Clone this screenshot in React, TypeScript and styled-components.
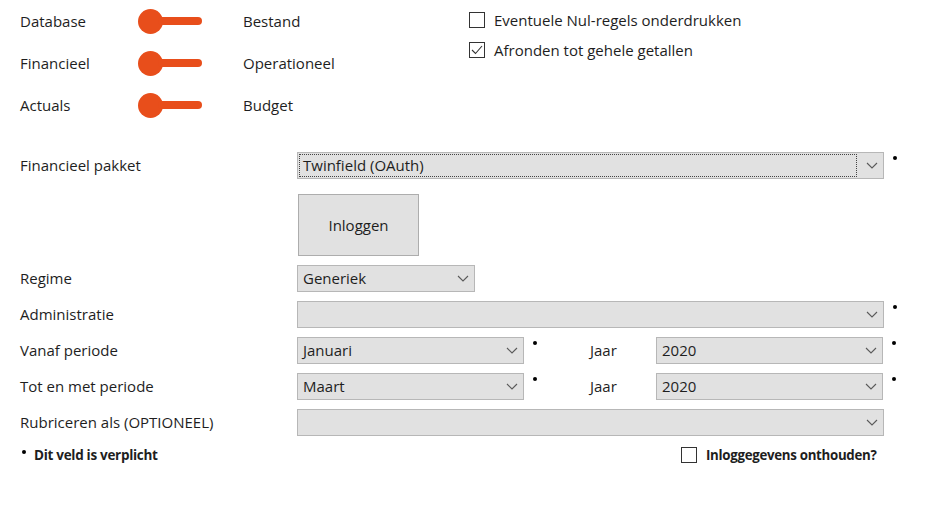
import React from "react";
import styled, { createGlobalStyle } from "styled-components";

const GlobalStyle = createGlobalStyle`
  html, body {
    margin: 0;
    padding: 0;
    background: #ffffff;
  }
  body {
    font-family: "Open Sans", "Noto Sans", "Liberation Sans", sans-serif;
    font-size: 15px;
    color: #1e1e1e;
  }
`;

const Page = styled.div`
  width: 945px;
  height: 512px;
  padding-left: 20px;
  box-sizing: border-box;
  overflow: hidden;
`;

const Top = styled.div`
  display: flex;
  align-items: flex-start;
`;

const ToggleGrid = styled.div`
  display: grid;
  grid-template-columns: 118px 105px 226px;
  grid-auto-rows: 42px;
  align-items: center;
`;

const Options = styled.div`
  display: flex;
  flex-direction: column;
  gap: 12px;
  padding-top: 11px;
`;

const Text = styled.span`
  line-height: 18px;
  white-space: nowrap;
`;

const ToggleTrack = styled.div`
  width: 64px;
  height: 8px;
  display: flex;
  align-items: center;
`;

const Knob = styled.div`
  width: 25px;
  height: 25px;
  flex: none;
  border-radius: 50%;
  background: #e84e1b;
`;

const Bar = styled.div`
  width: 44px;
  height: 8px;
  flex: none;
  margin-left: -5px;
  border-radius: 4px;
  background: #e84e1b;
`;

const CheckRow = styled.label`
  display: flex;
  align-items: center;
  gap: 9px;
  height: 18px;
`;

const Box = styled.span`
  width: 16px;
  height: 16px;
  flex: none;
  box-sizing: border-box;
  border: 1px solid #333;
  background: #fff;
  display: inline-flex;
  align-items: center;
  justify-content: center;
`;

const Strong = styled.span<{ $size?: number }>`
  font-weight: 700;
  font-size: ${(p) => p.$size ?? 13}px;
  letter-spacing: -0.3px;
  white-space: nowrap;
`;

const Form = styled.div`
  margin-top: 26px;
  display: flex;
  flex-direction: column;
  gap: 9px;
`;

const Row = styled.div`
  display: flex;
  align-items: center;
  min-height: 27px;
`;

const Label = styled.div`
  width: 277px;
  flex: none;
  white-space: nowrap;
  margin-top: -2px;
`;

const Select = styled.div<{ $w: number }>`
  width: ${(p) => p.$w}px;
  height: 27px;
  box-sizing: border-box;
  border: 1px solid #b7b7b7;
  background: #e1e1e1;
  display: flex;
  align-items: center;
  padding: 0 5px;
  flex: none;
`;

const Value = styled.span<{ $focus?: boolean }>`
  flex: 1;
  height: 21px;
  line-height: 21px;
  outline: ${(p) => (p.$focus ? "1px dotted #444" : "none")};
  margin-left: ${(p) => (p.$focus ? "-3px" : "0")};
  padding-left: ${(p) => (p.$focus ? "3px" : "0")};
  margin-right: 10px;
  white-space: nowrap;
`;

const Dot = styled.span`
  align-self: flex-start;
  width: 4px;
  height: 4px;
  border-radius: 50%;
  background: #000;
  margin: 4px 0 0 9px;
  flex: none;
`;

const InlineDot = styled.span`
  display: inline-block;
  width: 4px;
  height: 4px;
  border-radius: 50%;
  background: #000;
  vertical-align: 6px;
  margin: 0 8px 0 2px;
`;

const Jaar = styled.span`
  margin-left: 53px;
  width: 66px;
  flex: none;
  margin-top: -2px;
`;

const LoginButton = styled.button`
  margin-left: 278px;
  margin-top: 6px;
  width: 121px;
  height: 62px;
  border: 1px solid #adadad;
  background: #e1e1e1;
  font-family: inherit;
  font-size: 15px;
  color: #1e1e1e;
  padding: 0;
`;

const Footer = styled.div`
  display: flex;
  align-items: center;
  margin-top: 1px;
`;

const FooterLeft = styled.div`
  width: 661px;
  flex: none;
  margin-top: -2px;
`;

const Chevron = () => (
  <svg width="12" height="7" viewBox="0 0 12 7" fill="none">
    <path d="M1 1l5 5 5-5" stroke="#5a5a5a" strokeWidth="1.1" />
  </svg>
);

const Check = () => (
  <svg width="12" height="10" viewBox="0 0 12 10" fill="none">
    <path d="M1 5l3.5 3.5L11 1" stroke="#333" strokeWidth="1.1" />
  </svg>
);

function Toggle() {
  return (
    <ToggleTrack>
      <Knob />
      <Bar />
    </ToggleTrack>
  );
}

function Checkbox({ checked, children }: { checked?: boolean; children: React.ReactNode }) {
  return (
    <CheckRow>
      <Box>{checked && <Check />}</Box>
      {children}
    </CheckRow>
  );
}

function Dropdown({ w, value, focus }: { w: number; value?: string; focus?: boolean }) {
  return (
    <Select $w={w}>
      <Value $focus={focus}>{value}</Value>
      <Chevron />
    </Select>
  );
}

const toggles = [
  ["Database", "Bestand"],
  ["Financieel", "Operationeel"],
  ["Actuals", "Budget"],
];

export default function App() {
  return (
    <Page>
      <GlobalStyle />
      <Top>
        <ToggleGrid>
          {toggles.map(([a, b]) => (
            <React.Fragment key={a}>
              <Text>{a}</Text>
              <Toggle />
              <Text>{b}</Text>
            </React.Fragment>
          ))}
        </ToggleGrid>
        <Options>
          <Checkbox>
            <Text>Eventuele Nul-regels onderdrukken</Text>
          </Checkbox>
          <Checkbox checked>
            <Text>Afronden tot gehele getallen</Text>
          </Checkbox>
        </Options>
      </Top>

      <Form>
        <Row>
          <Label>Financieel pakket</Label>
          <Dropdown w={587} value="Twinfield (OAuth)" focus />
          <Dot />
        </Row>
        <LoginButton>Inloggen</LoginButton>
        <Row>
          <Label>Regime</Label>
          <Dropdown w={178} value="Generiek" />
        </Row>
        <Row>
          <Label>Administratie</Label>
          <Dropdown w={587} />
          <Dot />
        </Row>
        <Row>
          <Label>Vanaf periode</Label>
          <Dropdown w={227} value="Januari" />
          <Dot />
          <Jaar>Jaar</Jaar>
          <Dropdown w={227} value="2020" />
          <Dot />
        </Row>
        <Row>
          <Label>Tot en met periode</Label>
          <Dropdown w={227} value="Maart" />
          <Dot />
          <Jaar>Jaar</Jaar>
          <Dropdown w={227} value="2020" />
          <Dot />
        </Row>
        <Row>
          <Label>Rubriceren als (OPTIONEEL)</Label>
          <Dropdown w={587} />
        </Row>
        <Footer>
          <FooterLeft>
            <InlineDot />
            <Strong $size={13.5}>Dit veld is verplicht</Strong>
          </FooterLeft>
          <Checkbox>
            <Strong $size={13.3}>Inloggegevens onthouden?</Strong>
          </Checkbox>
        </Footer>
      </Form>
    </Page>
  );
}
